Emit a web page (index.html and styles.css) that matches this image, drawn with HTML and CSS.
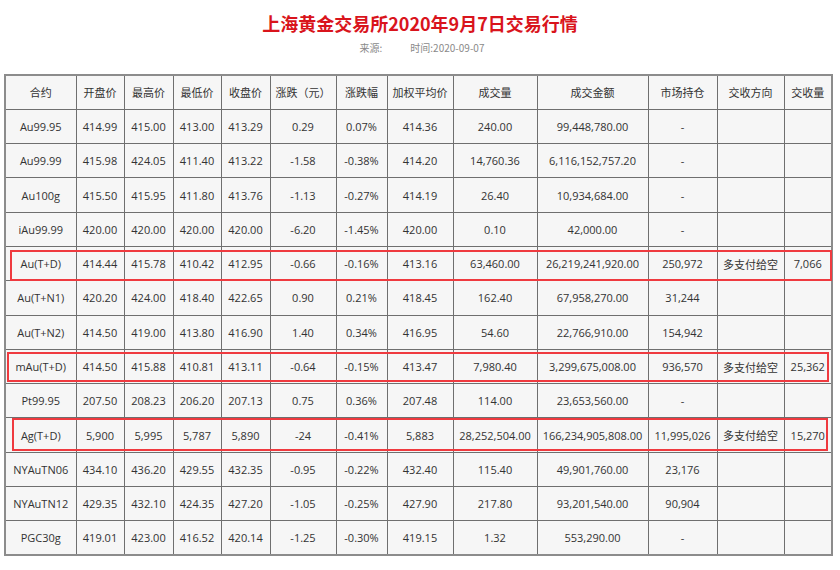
FILE: index.html
```html
<!DOCTYPE html>
<html lang="zh">
<head>
<meta charset="utf-8">
<title>上海黄金交易所2020年9月7日交易行情</title>
<link rel="stylesheet" href="styles.css">
</head>
<body>
<div class="page">
  <h1 class="title">上海黄金交易所2020年9月7日交易行情</h1>
  <div class="meta"><span>来源:</span><span>时间:2020-09-07</span></div>
  <div class="table-wrap">
    <table class="quotes">
      <colgroup>
        <col style="width:71px"><col style="width:48px"><col style="width:49px"><col style="width:48px"><col style="width:49px"><col style="width:66px"><col style="width:51px"><col style="width:66px"><col style="width:84px"><col style="width:111px"><col style="width:69px"><col style="width:67px"><col style="width:48px">
      </colgroup>
      <thead>
        <tr><th>合约</th><th>开盘价</th><th>最高价</th><th>最低价</th><th>收盘价</th><th>涨跌（元）</th><th>涨跌幅</th><th>加权平均价</th><th>成交量</th><th>成交金额</th><th>市场持仓</th><th>交收方向</th><th>交收量</th></tr>
      </thead>
      <tbody>
        <tr><td>Au99.95</td><td>414.99</td><td>415.00</td><td>413.00</td><td>413.29</td><td>0.29</td><td>0.07%</td><td>414.36</td><td>240.00</td><td>99,448,780.00</td><td>-</td><td></td><td></td></tr>
        <tr><td>Au99.99</td><td>415.98</td><td>424.05</td><td>411.40</td><td>413.22</td><td>-1.58</td><td>-0.38%</td><td>414.20</td><td>14,760.36</td><td>6,116,152,757.20</td><td>-</td><td></td><td></td></tr>
        <tr><td>Au100g</td><td>415.50</td><td>415.95</td><td>411.80</td><td>413.76</td><td>-1.13</td><td>-0.27%</td><td>414.19</td><td>26.40</td><td>10,934,684.00</td><td>-</td><td></td><td></td></tr>
        <tr><td>iAu99.99</td><td>420.00</td><td>420.00</td><td>420.00</td><td>420.00</td><td>-6.20</td><td>-1.45%</td><td>420.00</td><td>0.10</td><td>42,000.00</td><td>-</td><td></td><td></td></tr>
        <tr><td>Au(T+D)</td><td>414.44</td><td>415.78</td><td>410.42</td><td>412.95</td><td>-0.66</td><td>-0.16%</td><td>413.16</td><td>63,460.00</td><td>26,219,241,920.00</td><td>250,972</td><td>多支付给空</td><td>7,066</td></tr>
        <tr><td>Au(T+N1)</td><td>420.20</td><td>424.00</td><td>418.40</td><td>422.65</td><td>0.90</td><td>0.21%</td><td>418.45</td><td>162.40</td><td>67,958,270.00</td><td>31,244</td><td></td><td></td></tr>
        <tr><td>Au(T+N2)</td><td>414.50</td><td>419.00</td><td>413.80</td><td>416.90</td><td>1.40</td><td>0.34%</td><td>416.95</td><td>54.60</td><td>22,766,910.00</td><td>154,942</td><td></td><td></td></tr>
        <tr><td>mAu(T+D)</td><td>414.50</td><td>415.88</td><td>410.81</td><td>413.11</td><td>-0.64</td><td>-0.15%</td><td>413.47</td><td>7,980.40</td><td>3,299,675,008.00</td><td>936,570</td><td>多支付给空</td><td>25,362</td></tr>
        <tr><td>Pt99.95</td><td>207.50</td><td>208.23</td><td>206.20</td><td>207.13</td><td>0.75</td><td>0.36%</td><td>207.48</td><td>114.00</td><td>23,653,560.00</td><td>-</td><td></td><td></td></tr>
        <tr><td>Ag(T+D)</td><td>5,900</td><td>5,995</td><td>5,787</td><td>5,890</td><td>-24</td><td>-0.41%</td><td>5,883</td><td>28,252,504.00</td><td>166,234,905,808.00</td><td>11,995,026</td><td>多支付给空</td><td>15,270</td></tr>
        <tr><td>NYAuTN06</td><td>434.10</td><td>436.20</td><td>429.55</td><td>432.35</td><td>-0.95</td><td>-0.22%</td><td>432.40</td><td>115.40</td><td>49,901,760.00</td><td>23,176</td><td></td><td></td></tr>
        <tr><td>NYAuTN12</td><td>429.35</td><td>432.10</td><td>424.35</td><td>427.20</td><td>-1.05</td><td>-0.25%</td><td>427.90</td><td>217.80</td><td>93,201,540.00</td><td>90,904</td><td></td><td></td></tr>
        <tr><td>PGC30g</td><td>419.01</td><td>423.00</td><td>416.52</td><td>420.14</td><td>-1.25</td><td>-0.30%</td><td>419.15</td><td>1.32</td><td>553,290.00</td><td>-</td><td></td><td></td></tr>
      </tbody>
    </table>
    <div class="mark mark-1"></div>
    <div class="mark mark-2"></div>
    <div class="mark mark-3"></div>
  </div>
</div>
</body>
</html>
```

FILE: styles.css
```css
html, body {
  margin: 0;
  padding: 0;
  background: #ffffff;
}

.page {
  width: 840px;
  padding-top: 11px;
  font-family: "Open Sans", "Noto Sans CJK SC", sans-serif;
  color: #333333;
}

.title {
  margin: 0;
  text-align: center;
  font-family: "Noto Sans CJK SC", sans-serif;
  font-size: 18px;
  line-height: 24px;
  font-weight: bold;
  color: #d9141c;
}

.meta {
  display: flex;
  justify-content: center;
  gap: 28px;
  margin-top: 6px;
  padding-left: 4px;
  font-family: "Noto Sans CJK SC", sans-serif;
  font-size: 10px;
  line-height: 14px;
  color: #8a8a8a;
}

.table-wrap {
  position: relative;
  margin: 19px 0 0 4px;
  width: 828px;
}

.quotes {
  table-layout: fixed;
  border-collapse: collapse;
  width: 827px;
  background: #f6f6f6;
  border: 2px solid #8c8c8c;
  font-size: 11px;
}

.quotes tr {
  height: 34.3px;
}

.quotes th,
.quotes td {
  padding: 0 2px;
  border: 1px solid #6f6f6f;
  text-align: center;
  white-space: nowrap;
  font-weight: normal;
  color: #333333;
}

.quotes th {
  font-family: "Noto Sans CJK SC", sans-serif;
}

.mark {
  position: absolute;
  border: 2px solid #ef3a3f;
  box-sizing: border-box;
  pointer-events: none;
}

.mark-1 {
  left: 6px;
  top: 176px;
  width: 822px;
  height: 31px;
}

.mark-2 {
  left: 3px;
  top: 278px;
  width: 822px;
  height: 30px;
}

.mark-3 {
  left: 8px;
  top: 344px;
  width: 816px;
  height: 33px;
}
```
